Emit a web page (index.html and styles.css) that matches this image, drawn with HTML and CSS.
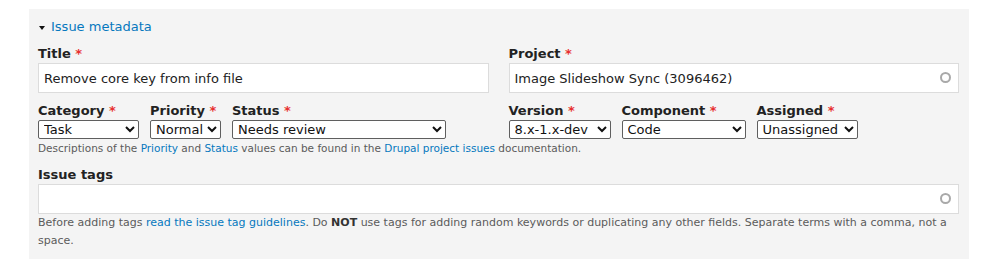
FILE: index.html
```html
<!DOCTYPE html>
<html>
<head>
    <meta charset="UTF-8">
    <title>Issue metadata</title>
    <link rel="stylesheet" href="styles.css">
</head>
<body>
    <div class="panel">
        <div class="panel-title">
            <span class="caret"></span><a href="#">Issue metadata</a>
        </div>
        <div class="columns">
            <div class="field">
                <label for="title">Title <span class="req">*</span></label>
                <input type="text" id="title" class="text" value="Remove core key from info file">
            </div>
            <div class="field">
                <label for="project">Project <span class="req">*</span></label>
                <div class="autocomplete">
                    <input type="text" id="project" class="text" value="Image Slideshow Sync (3096462)">
                    <span class="throbber"></span>
                </div>
            </div>
            <div class="selects">
                <div class="select-field">
                    <label for="category">Category <span class="req">*</span></label>
                    <select id="category" class="w-category">
                        <option>Task</option>
                        <option>Bug report</option>
                        <option>Feature request</option>
                        <option>Support request</option>
                        <option>Plan</option>
                    </select>
                </div>
                <div class="select-field">
                    <label for="priority">Priority <span class="req">*</span></label>
                    <select id="priority" class="w-priority">
                        <option>Normal</option>
                        <option>Critical</option>
                        <option>Major</option>
                        <option>Minor</option>
                    </select>
                </div>
                <div class="select-field">
                    <label for="status">Status <span class="req">*</span></label>
                    <select id="status" class="w-status">
                        <option>Needs review</option>
                        <option>Active</option>
                        <option>Needs work</option>
                        <option>Reviewed &amp; tested by the community</option>
                        <option>Fixed</option>
                    </select>
                </div>
            </div>
            <div class="selects">
                <div class="select-field">
                    <label for="version">Version <span class="req">*</span></label>
                    <select id="version" class="w-version">
                        <option>8.x-1.x-dev</option>
                    </select>
                </div>
                <div class="select-field">
                    <label for="component">Component <span class="req">*</span></label>
                    <select id="component" class="w-component">
                        <option>Code</option>
                        <option>Documentation</option>
                        <option>Miscellaneous</option>
                        <option>User interface</option>
                    </select>
                </div>
                <div class="select-field">
                    <label for="assigned">Assigned <span class="req">*</span></label>
                    <select id="assigned" class="w-assigned">
                        <option>Unassigned</option>
                    </select>
                </div>
            </div>
        </div>
        <p class="description small">Descriptions of the <a href="#">Priority</a> and <a href="#">Status</a> values can be found in the <a href="#">Drupal project issues</a> documentation.</p>

        <div class="field tags">
            <label for="tags">Issue tags</label>
            <div class="autocomplete">
                <input type="text" id="tags" class="text" value="">
                <span class="throbber"></span>
            </div>
            <p class="description">Before adding tags <a href="#">read the issue tag guidelines</a>. Do <strong>NOT</strong> use tags for adding random keywords or duplicating any other fields. Separate terms with a comma, not a space.</p>
        </div>
    </div>
</body>
</html>
```

FILE: styles.css
```css
body {
    font-family: "DejaVu Sans", Verdana, sans-serif;
    font-size: 13px;
    line-height: 18px;
    color: #222;
    margin: 0;
    padding: 9px 24px 0 29px;
    background: #fff;
}
a {
    color: #0678be;
    text-decoration: none;
}
.panel {
    background-color: #f4f4f4;
    padding: 9px 10px 9px 9px;
}
.panel-title {
    display: flex;
    align-items: center;
    padding-left: 1px;
    margin-bottom: 9px;
}
.caret {
    width: 0;
    height: 0;
    border-left: 3.5px solid transparent;
    border-right: 3.5px solid transparent;
    border-top: 4px solid #111;
    margin: 1px 6px 0 0;
}
.columns {
    display: grid;
    grid-template-columns: 1fr 1fr;
    column-gap: 20px;
    row-gap: 9px;
}
label {
    display: block;
    font-weight: bold;
    color: #222;
}
.req {
    color: #e72f2f;
}
input.text {
    display: block;
    width: 100%;
    height: 30px;
    padding: 0 5px;
    border: 1px solid #dcdcdc;
    background: #fff;
    box-sizing: border-box;
    font-family: "DejaVu Sans", Verdana, sans-serif;
    font-size: 13px;
    color: #222;
}
.autocomplete {
    position: relative;
}
.throbber {
    position: absolute;
    right: 8px;
    top: 50%;
    width: 7px;
    height: 7px;
    margin-top: -6px;
    border: 2px solid #a9a9a9;
    border-radius: 50%;
}
.selects {
    display: flex;
    gap: 11px;
}
select {
    display: block;
    height: 19px;
    padding: 0 0 0 1px;
    font-family: "DejaVu Sans", Verdana, sans-serif;
    font-size: 13px;
    color: #111;
    background: #fff;
    border: 1px solid #5f5f5f;
    border-radius: 2px;
}
.w-category { width: 101px; }
.w-priority { width: 71px; }
.w-status { width: 214px; }
.w-version { width: 102px; }
.w-component { width: 124px; }
.w-assigned { width: 101px; }
.description {
    margin: 0;
    font-size: 11px;
    line-height: 18px;
    color: #5b5b5b;
}
.description.small {
    font-size: 10.5px;
}
.description strong {
    color: #333;
}
.tags {
    margin-top: 9px;
}
```
